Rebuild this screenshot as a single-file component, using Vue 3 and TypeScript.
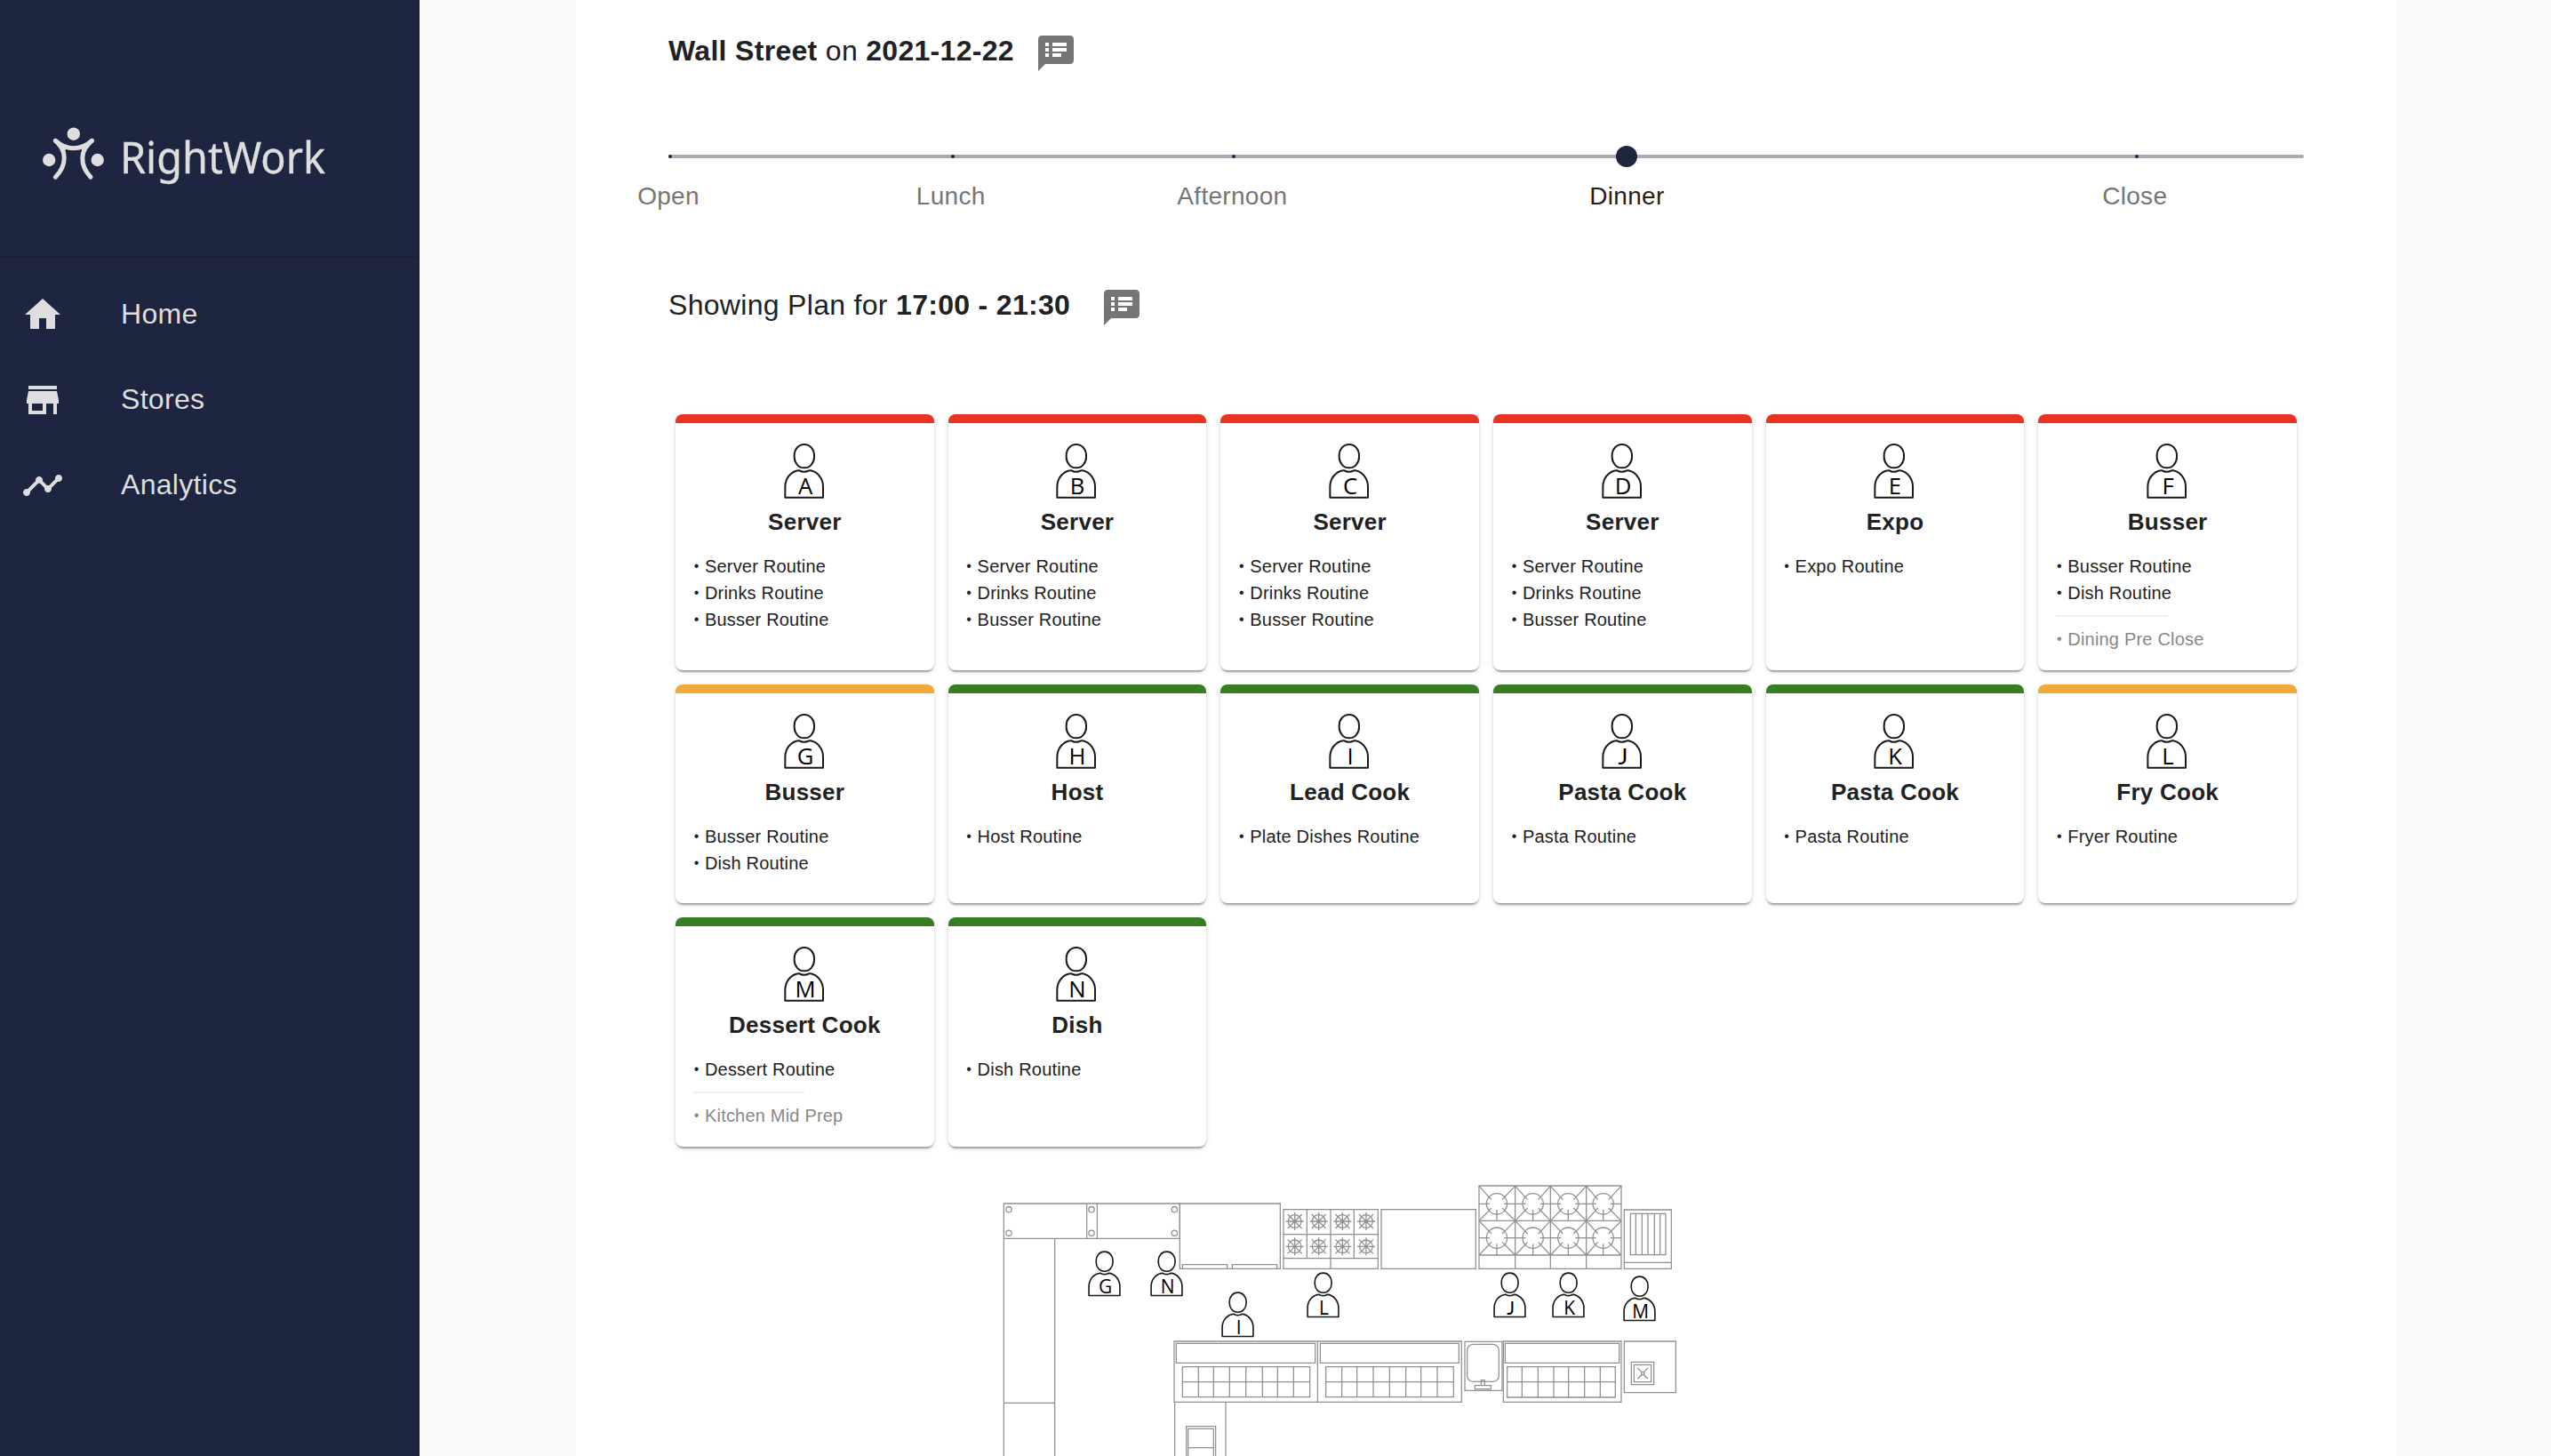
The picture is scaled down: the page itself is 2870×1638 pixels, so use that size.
<script setup lang="ts">
interface NavItem { label: string; icon: string }
interface Shift { label: string; left: number; active?: boolean }
interface Role { id: string; title: string; level: 'red' | 'amber' | 'green'; tasks: string[]; extra?: string }
interface Pin { id: string; x: number; y: number }

const nav: NavItem[] = [
  { label: 'Home', icon: 'M10 20v-6h4v6h5v-8h3L12 3 2 12h3v8z' },
  { label: 'Stores', icon: 'M20 4H4v2h16V4zm1 10v-2l-1-5H4l-1 5v2h1v6h10v-6h4v6h2v-6h1zm-9 4H6v-4h6v4z' },
  {
    label: 'Analytics',
    icon: 'M23 8c0 1.1-.9 2-2 2-.18 0-.35-.02-.51-.07l-3.56 3.55c.05.16.07.34.07.52 0 1.1-.9 2-2 2s-2-.9-2-2c0-.18.02-.36.07-.52l-2.55-2.55c-.16.05-.34.07-.52.07s-.36-.02-.52-.07l-4.55 4.56c.05.16.07.33.07.51 0 1.1-.9 2-2 2s-2-.9-2-2 .9-2 2-2c.18 0 .35.02.51.07l4.56-4.55C8.02 9.36 8 9.18 8 9c0-1.1.9-2 2-2s2 .9 2 2c0 .18-.02.36-.07.52l2.55 2.55c.16-.05.34-.07.52-.07s.36.02.52.07l3.55-3.56C19.02 8.35 19 8.18 19 8c0-1.1.9-2 2-2s2 .9 2 2z',
  },
]

const notesIcon =
  'M20 2H4c-1.1 0-1.99.9-1.99 2L2 22l4-4h14c1.1 0 2-.9 2-2V4c0-1.1-.9-2-2-2zM8 14H6v-2h2v2zm0-3H6V9h2v2zm0-3H6V6h2v2zm7 6h-5v-2h5v2zm3-3h-8V9h8v2zm0-3h-8V6h8v2z'

const shifts: Shift[] = [
  { label: 'Open', left: 0 },
  { label: 'Lunch', left: 17.27 },
  { label: 'Afternoon', left: 34.48 },
  { label: 'Dinner', left: 58.61, active: true },
  { label: 'Close', left: 89.66 },
]

const server = ['Server Routine', 'Drinks Routine', 'Busser Routine']
const roles: Role[] = [
  { id: 'A', title: 'Server', level: 'red', tasks: server },
  { id: 'B', title: 'Server', level: 'red', tasks: server },
  { id: 'C', title: 'Server', level: 'red', tasks: server },
  { id: 'D', title: 'Server', level: 'red', tasks: server },
  { id: 'E', title: 'Expo', level: 'red', tasks: ['Expo Routine'] },
  { id: 'F', title: 'Busser', level: 'red', tasks: ['Busser Routine', 'Dish Routine'], extra: 'Dining Pre Close' },
  { id: 'G', title: 'Busser', level: 'amber', tasks: ['Busser Routine', 'Dish Routine'] },
  { id: 'H', title: 'Host', level: 'green', tasks: ['Host Routine'] },
  { id: 'I', title: 'Lead Cook', level: 'green', tasks: ['Plate Dishes Routine'] },
  { id: 'J', title: 'Pasta Cook', level: 'green', tasks: ['Pasta Routine'] },
  { id: 'K', title: 'Pasta Cook', level: 'green', tasks: ['Pasta Routine'] },
  { id: 'L', title: 'Fry Cook', level: 'amber', tasks: ['Fryer Routine'] },
  { id: 'M', title: 'Dessert Cook', level: 'green', tasks: ['Dessert Routine'], extra: 'Kitchen Mid Prep' },
  { id: 'N', title: 'Dish', level: 'green', tasks: ['Dish Routine'] },
]

const bodyPath = 'M4 182V146C4 116 24 95 48 91Q53 90 56 93Q68 98 80 93Q84 90 90 91C114 96 132 118 132 146V182Z'

// Floor plan, three drawing units per pixel
const pins: Pin[] = [
  { id: 'G', x: 342, y: 262 },
  { id: 'N', x: 552, y: 262 },
  { id: 'I', x: 792, y: 400 },
  { id: 'L', x: 1080, y: 334 },
  { id: 'J', x: 1710, y: 334 },
  { id: 'K', x: 1908, y: 334 },
  { id: 'M', x: 2148, y: 346 },
]
const screws = [[75, 122], [75, 202], [354, 122], [354, 202], [634, 122], [634, 202]]
const burners = [1040, 1121, 1201, 1281].flatMap((x) => [[x, 162], [x, 247]])
const wokCells = [
  { x: 1722, l: 1662, r: 1784 },
  { x: 1844, l: 1784, r: 1903 },
  { x: 1963, l: 1903, r: 2024 },
  { x: 2081, l: 2024, r: 2142 },
]
const woks = wokCells.flatMap((c) => [
  { ...c, y: 103, t: 43, b: 160 },
  { ...c, y: 218, t: 160, b: 276 },
])
const wokArms = (w: { x: number; y: number; l: number; r: number; t: number; b: number }) =>
  `M${w.l} ${w.t}L${w.x - 18} ${w.y - 14}M${w.r} ${w.t}L${w.x + 18} ${w.y - 14}` +
  `M${w.l} ${w.b}L${w.x - 18} ${w.y + 14}M${w.r} ${w.b}L${w.x + 18} ${w.y + 14}` +
  `M${w.l} ${w.y}H${w.x - 24}M${w.x + 24} ${w.y}H${w.r}M${w.x} ${w.y + 20}V${w.b}`
</script>

<template>
  <div class="app">
    <aside class="sidebar">
      <div class="brand">
        <svg class="logo" width="344" height="80" viewBox="40 130 344 80">
          <g fill="#dedede">
            <circle cx="82.8" cy="150.7" r="7.2" />
            <circle cx="55.2" cy="180" r="7.2" />
            <circle cx="109.7" cy="180" r="7.2" />
          </g>
          <g fill="none" stroke="#dedede" stroke-width="5" stroke-linecap="round" stroke-linejoin="round">
            <path d="M62.4 158.3Q72 166.7 82.8 166.7Q93.6 166.7 103.4 158.3" />
            <path d="M62.4 158.3C75.5 169 75.5 186 62.4 199.2" />
            <path d="M103.4 158.3C89.5 169 89.5 186 102 199.2" />
            <path d="M66.5 162.5L71.5 168M99.3 162.5L94.3 168" />
          </g>
          <text x="135" y="195" font-size="50" textLength="231" lengthAdjust="spacingAndGlyphs">RightWork</text>
        </svg>
      </div>
      <nav class="nav">
        <a v-for="n in nav" :key="n.label" class="nav-item">
          <svg width="48" height="48" viewBox="0 0 24 24"><path :d="n.icon" /></svg>
          <span>{{ n.label }}</span>
        </a>
      </nav>
    </aside>

    <main class="main">
      <section class="panel">
        <header class="heading">
          <h2 class="store"><b>Wall Street</b> on <b>2021-12-22</b></h2>
          <svg width="48" height="48" viewBox="0 0 24 24"><path :d="notesIcon" /></svg>
        </header>

        <div class="slider">
          <div class="rail">
            <template v-for="s in shifts" :key="s.label">
              <i :class="s.active ? 'thumb' : 'mark'" :style="{ left: s.left + '%' }"></i>
              <span class="shift" :class="{ active: s.active }" :style="{ left: s.left + '%' }">{{ s.label }}</span>
            </template>
          </div>
        </div>

        <header class="heading">
          <h2 class="plan">Showing Plan for <b>17:00 - 21:30</b></h2>
          <svg width="48" height="48" viewBox="0 0 24 24"><path :d="notesIcon" /></svg>
        </header>

        <div class="cards">
          <article v-for="r in roles" :key="r.id" class="card" :class="r.level">
            <svg class="person" width="46" height="70" viewBox="0 0 138 210">
              <rect x="35" y="3" width="67" height="79" rx="33" ry="36" />
              <path :d="bodyPath" />
              <text :class="{ short: r.id === 'J' }" x="72" y="172">{{ r.id }}</text>
            </svg>
            <h3>{{ r.title }}</h3>
            <ul>
              <li v-for="t in r.tasks" :key="t"><span class="dot">•</span> {{ t }}</li>
            </ul>
            <template v-if="r.extra">
              <hr />
              <ul class="extra">
                <li><span class="dot">•</span> {{ r.extra }}</li>
              </ul>
            </template>
          </article>
        </div>

        <svg class="floor" width="800" height="318" viewBox="0 0 2400 954">
          <g class="fixtures">
            <!-- dish tables -->
            <path d="M58 102H652V220H58ZM338 102V220M373 102V220" />
            <circle v-for="(s, i) in screws" :key="i" :cx="s[0]" :cy="s[1]" r="9.5" />
            <path d="M58 220V960M230 220V960M58 775H230" />
            <!-- oven -->
            <path d="M652 102H991V322H652ZM661 322V308H812V322M829 322V308H980V322" />
            <!-- burner range -->
            <path d="M1002 122H1321V322H1002ZM1002 206H1321M1002 287H1321M1081 122V287M1161 122V322M1240 122V287" />
            <g v-for="(b, i) in burners" :key="'b' + i" :transform="`translate(${b[0]} ${b[1]})`">
              <circle r="22" />
              <path d="M-30 0H30M0-30V30M-24-24L24 24M-24 24L24-24" />
            </g>
            <path d="M1332 122H1651V322H1332Z" />
            <!-- wok range -->
            <path d="M1662 42H2142V322H1662ZM1662 160H2142M1662 276H2142M1784 42V322M1903 42V322M2024 42V322" />
            <g v-for="(w, i) in woks" :key="'w' + i">
              <circle :cx="w.x" :cy="w.y" r="35" />
              <path :d="wokArms(w)" />
            </g>
            <!-- grill -->
            <path d="M2152 123H2311V322H2152ZM2152 301H2311M2173 136H2292V275H2173ZM2191 136V275M2212 136V275M2232 136V275M2254 136V275M2273 136V275" />
            <!-- prep counters -->
            <path d="M633 567H1603V772H633ZM1117 567V772M640 574H1109V640H640ZM1126 574H1594V640H1126Z" />
            <path d="M661 653H1091V755H661ZM661 704H1091M715 653V755M766 653V755M820 653V755M875 653V755M931 653V755M982 653V755M1036 653V755" />
            <path d="M1145 653H1576V755H1145ZM1145 704H1576M1199 653V755M1250 653V755M1305 653V755M1360 653V755M1415 653V755M1466 653V755M1521 653V755" />
            <!-- sink -->
            <path d="M1614 568H1740V733H1614ZM1648 716H1702V728H1648ZM1669 716V698H1681V716" />
            <rect x="1622" y="577" width="107" height="126" rx="20" />
            <path d="M1744 567H2142V772H1744ZM1750 574H2135V640H1750Z" />
            <path d="M1757 653H2122V756H1757ZM1757 704H2122M1807 653V756M1861 653V756M1914 653V756M1964 653V756M2018 653V756M2071 653V756" />
            <!-- drain -->
            <path d="M2152 567H2326V740H2152ZM2176 637H2252V713H2176ZM2185 646H2243V704H2185ZM2197 657L2211 671M2232 657L2218 671M2197 693L2211 680M2232 693L2218 680M2210 671H2219V680H2210Z" />
            <path d="M635 772V960M807 772V960M674 960V854H773V960M680 960V862H766V960M680 926H766" />
          </g>
          <g v-for="p in pins" :key="p.id" class="person" :transform="`translate(${p.x} ${p.y}) scale(.816 .827)`">
            <rect x="34" y="3" width="69" height="80" rx="33" ry="36" />
            <path :d="bodyPath" />
            <text :class="{ short: p.id === 'J' }" x="72" y="173">{{ p.id }}</text>
          </g>
        </svg>
      </section>
    </main>
  </div>
</template>

<style>
body {
  margin: 0;
  overflow: hidden;
}
</style>

<style scoped>
.app {
  display: flex;
  height: 1638px;
  overflow: hidden;
  background: #f9fafc;
  color: #212121;
  font-family: 'Liberation Sans', Arial, sans-serif;
}
.sidebar {
  box-sizing: border-box;
  width: 472px;
  flex: none;
  background: #1e2540;
  border-right: 2px solid #1b2039;
  color: #dedede;
}
.brand {
  box-sizing: border-box;
  height: 290px;
  padding: 130px 0 0 40px;
  border-bottom: 2px solid #1b2039;
}
.logo {
  display: block;
}
.logo text {
  fill: #dedede;
  stroke: #dedede;
  stroke-width: 0.4;
  font-family: 'Noto Sans', 'Open Sans', sans-serif;
}
.nav {
  padding-top: 16px;
}
.nav-item {
  display: flex;
  align-items: center;
  gap: 64px;
  height: 96px;
  padding-left: 24px;
  font-size: 32px;
  letter-spacing: 0.00938em;
}
.nav-item span {
  padding-bottom: 2px;
}
.nav-item svg {
  fill: #dedede;
}
.main {
  flex: 1;
  padding-left: 176px;
}
.panel {
  box-sizing: border-box;
  width: 2048px;
  height: 1638px;
  padding: 36px 104px 0;
  background: #fff;
}
.heading {
  display: flex;
  align-items: flex-start;
  height: 48px;
}
.heading h2 {
  margin: 0;
  font-size: 32px;
  font-weight: 400;
  line-height: 42px;
  letter-spacing: 0.0096em;
  white-space: nowrap;
}
.store {
  width: 412px;
}
.plan {
  width: 486px;
}
.heading svg {
  fill: #757575;
}
.slider {
  height: 238px;
  box-sizing: border-box;
  padding-top: 90px;
}
.rail {
  position: relative;
  height: 4px;
  border-radius: 2px;
  background: #a9acb7;
}
.mark {
  position: absolute;
  top: 0;
  width: 4px;
  height: 4px;
  border-radius: 2px;
  background: #1e2540;
}
.thumb {
  position: absolute;
  top: -10px;
  width: 24px;
  height: 24px;
  margin-left: -12px;
  border-radius: 50%;
  background: #1e2540;
}
.shift {
  position: absolute;
  top: 27px;
  transform: translateX(-50%);
  font-size: 28px;
  line-height: 40px;
  letter-spacing: 0.01071em;
  color: #757575;
}
.shift.active {
  color: #212121;
}
.cards {
  display: grid;
  grid-template-columns: repeat(6, 1fr);
  gap: 16px;
  margin-top: 96px;
  padding: 0 8px;
}
.card {
  display: flex;
  flex-direction: column;
  align-items: flex-start;
  box-sizing: border-box;
  padding: 23px 20px 20px;
  border-top: 10px solid;
  border-radius: 8px;
  background: #fff;
  box-shadow: 0 4px 2px -2px rgba(0, 0, 0, 0.2), 0 2px 2px rgba(0, 0, 0, 0.14), 0 2px 6px rgba(0, 0, 0, 0.12);
}
.red {
  border-top-color: #ea3323;
}
.amber {
  border-top-color: #f2a93b;
}
.green {
  border-top-color: #377e22;
}
.person {
  fill: none;
  stroke: #1a1a1a;
  stroke-width: 6;
  stroke-linejoin: round;
}
.person text {
  fill: #000;
  stroke: none;
  font-family: 'Open Sans', 'Noto Sans', sans-serif;
  font-size: 77px;
  text-anchor: middle;
}
.person .short {
  font-family: Lato, sans-serif;
}
.card .person {
  align-self: center;
  margin-right: 1px;
}
.card h3 {
  align-self: center;
  margin: 0 0 16px;
  font-size: 26px;
  line-height: 37px;
  letter-spacing: 0.00938em;
  white-space: nowrap;
}
.card ul {
  margin: 0;
  padding: 0 0 10px;
  list-style: none;
  font-size: 20px;
  line-height: 30px;
  letter-spacing: 0.01em;
}
.dot {
  display: inline-block;
  width: 7.2px;
  font-size: 16px;
  line-height: 20px;
  text-align: center;
  vertical-align: 2px;
}
.card hr {
  width: 50%;
  height: 2px;
  margin: 0 0 10px;
  border: 0;
  background: #eee;
}
.card .extra {
  padding: 0;
  color: #888;
}
.floor {
  display: block;
  margin: 30px 0 0 358px;
}
.fixtures {
  fill: none;
  stroke: #909090;
  stroke-width: 3.8;
}
</style>
